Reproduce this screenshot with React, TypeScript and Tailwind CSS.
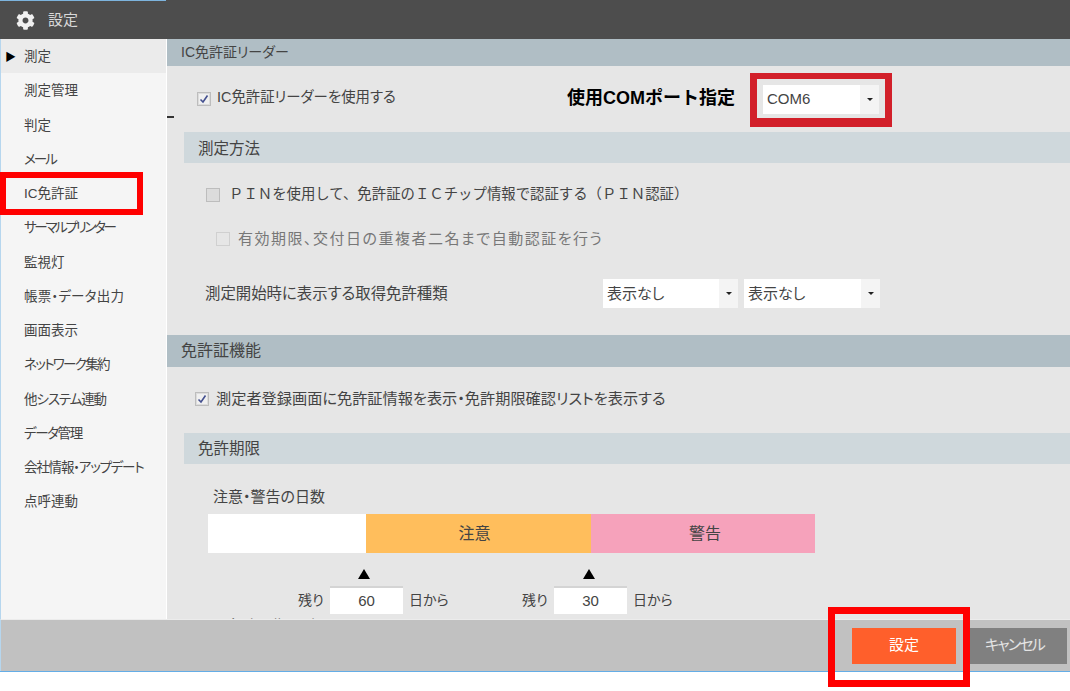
import { FaCog } from "react-icons/fa";

const menu = [
  { label: "測定", tracking: "" },
  { label: "測定管理", tracking: "" },
  { label: "判定", tracking: "" },
  { label: "メール", tracking: "tracking-[-2px]" },
  { label: "IC免許証", tracking: "" },
  { label: "サーマルプリンター", tracking: "tracking-[-2.3px]" },
  { label: "監視灯", tracking: "" },
  { label: "帳票・データ出力", tracking: "tracking-[0.2px]" },
  { label: "画面表示", tracking: "" },
  { label: "ネットワーク集約", tracking: "tracking-[-1.7px]" },
  { label: "他システム連動", tracking: "tracking-[-1.1px]" },
  { label: "データ管理", tracking: "tracking-[-1.4px]" },
  { label: "会社情報・アップデート", tracking: "tracking-[-1.2px]" },
  { label: "点呼連動", tracking: "" },
];

const fontStack = "font-['Liberation_Sans','Noto_Sans_CJK_JP',sans-serif]";
const palt = "[font-feature-settings:'palt']";

const Check = ({ on, dim }: { on?: boolean; dim?: boolean }) => (
  <span
    className={`flex h-[14px] w-[14px] shrink-0 items-center justify-center border ${
      dim ? "border-[#d0d0d0] bg-[#e6e6e6]" : "border-[#bdbdbd] bg-[#dcdcdc]"
    }`}
  >
    {on && (
      <svg viewBox="0 0 12 12" className="h-[12px] w-[12px]">
        <rect x="1" y="1" width="10" height="10" fill="#f0f0f0" />
        <path d="M2.5 6.5 L5 9 L9.5 2.5" fill="none" stroke="#44508f" strokeWidth="1.6" />
      </svg>
    )}
  </span>
);

const Select = ({ value, className }: { value: string; className: string }) => (
  <div className={`flex h-[29px] items-center bg-white ${className}`}>
    <span className={`flex-1 pl-1 pt-px text-[15px] text-[#444] ${palt}`}>{value}</span>
    <span className="flex h-full w-[19px] items-center justify-center bg-[#f4f4f4]">
      <span className="h-0 w-0 border-x-[3px] border-t-[3px] border-x-transparent border-t-[#222]" />
    </span>
  </div>
);

const Remain = ({ days, className, arrow }: { days: string; className: string; arrow: string }) => (
  <div className={`flex flex-col ${className}`}>
    <div className={`h-0 w-0 border-x-[6px] border-b-[10px] border-x-transparent border-b-black ${arrow}`} />
    <div className={`mt-[7px] flex items-center text-[14px] text-[#444] ${palt}`}>
      <span className="w-[32px]">残り</span>
      <span className="flex h-[28px] w-[73px] items-center justify-center border-t-2 border-[#d4d4d4] bg-white text-[15px]">
        {days}
      </span>
      <span className="ml-[6px]">日から</span>
    </div>
  </div>
);

export default function App() {
  return (
    <div className={`relative flex h-[691px] w-[1070px] flex-col overflow-hidden bg-white ${fontStack}`}>
      {/* title bar */}
      <div className="flex h-[39px] shrink-0 bg-[#4d4d4d]">
        <div className="flex h-full w-[166px] items-center border-t border-[#7db4de] pl-[16px] text-[15px] text-[#d8d8d8]">
          <FaCog className="h-[19px] w-[19px] text-[#f0f0f0]" />
          <span className="ml-[13px] pt-px">設定</span>
        </div>
      </div>

      <div className="flex h-[580px] shrink-0">
        {/* side menu */}
        <div className="w-[167px] shrink-0 border-r border-l border-r-white border-l-[#b6d6ee] bg-[#f5f5f5]">
          {menu.map((item, i) => (
            <div
              key={item.label}
              className={`flex h-[34.25px] items-center pt-[2px] text-[13.5px] text-[#444] ${palt} ${i === 0 ? "bg-[#ebebeb]" : ""}`}
            >
              <span className="w-[23px] pl-1 text-[11px] text-black">{i === 0 ? "▶" : ""}</span>
              <span className={`whitespace-nowrap ${item.tracking}`}>{item.label}</span>
            </div>
          ))}
        </div>

        {/* settings body */}
        <div className={`min-w-0 flex-1 overflow-hidden bg-[#e6e6e6] text-[15px] text-[#444] ${palt}`}>
          <div className="flex h-[27px] items-center bg-[#b0bec5] pb-px pl-[14px] text-[14px]">IC免許証リーダー</div>

          <div className="flex h-[66px] items-center pl-[30px]">
            <Check on />
            <span className="ml-[6px] mb-[2px] w-[350px] text-[14.4px]">IC免許証リーダーを使用する</span>
            <span className="mb-px w-[196px] text-[18px] font-bold text-black [font-feature-settings:normal]">使用COMポート指定</span>
            <Select value="COM6" className="w-[116px]" />
          </div>

          <div className="ml-[17px] flex h-[31px] items-center bg-[#cfd8dc] pl-[14px] pt-[2px] text-[15.5px]">測定方法</div>

          <div className="mt-[23px] flex h-[18px] items-center pl-[39px]">
            <Check />
            <span className="ml-[9px] text-[14.4px] [font-feature-settings:normal]">
              ＰＩＮを使用して、免許証のＩＣチップ情報で認証する（ＰＩＮ認証）
            </span>
          </div>
          <div className="mt-[26px] flex h-[18px] items-center pl-[49px] text-[#777]">
            <Check dim />
            <span className="ml-[8px] text-[15px] tracking-[1.5px]">有効期限、交付日の重複者二名まで自動認証を行う</span>
          </div>

          <div className="mt-[31px] flex items-center pl-[38px]">
            <span className="w-[398px] text-[15.4px]">測定開始時に表示する取得免許種類</span>
            <Select value="表示なし" className="w-[135px]" />
            <Select value="表示なし" className="ml-[6px] w-[136px]" />
          </div>

          <div className="mt-[27px] flex h-[32px] items-center bg-[#b0bec5] pl-[14px] text-[16px]">免許証機能</div>

          <div className="mt-[23px] flex h-[18px] items-center pl-[28px]">
            <Check on />
            <span className="ml-[7px] text-[15.2px]">測定者登録画面に免許証情報を表示・免許期限確認リストを表示する</span>
          </div>

          <div className="ml-[17px] mt-[25px] flex h-[31px] items-center bg-[#cfd8dc] pl-[14px] text-[15.5px]">免許期限</div>

          <div className="ml-[46px] mt-[24px] h-[18px] leading-[18px]">注意・警告の日数</div>
          <div className="ml-[41px] mt-[8px] flex h-[39px] w-[607px] text-[16px]">
            <div className="w-[158px] bg-white" />
            <div className="flex w-[225px] items-center justify-center bg-[#ffbe5c] pr-[8px] pt-px">注意</div>
            <div className="flex w-[224px] items-center justify-center bg-[#f6a2bb] pl-[4px] pt-px">警告</div>
          </div>

          <div className="mt-[16px] flex">
            <Remain days="60" arrow="ml-[60px]" className="ml-[131px] w-[224px]" />
            <Remain days="30" arrow="ml-[61px]" className="" />
          </div>
          <div className="ml-[61px] mt-[4px] text-[15px] leading-[16px] text-[#666]">免許証期限確認リスト</div>
        </div>
      </div>

      {/* footer */}
      <div className={`flex h-[52px] shrink-0 items-center justify-end gap-[14px] border-t border-l border-t-[#ececec] border-l-[#b6d6ee] bg-[#c1c1c1] pr-[3px] text-[15px] ${palt}`}>
        <button className="h-[36px] w-[104px] bg-[#ff5f2b] text-white">設定</button>
        <button className="h-[36px] w-[97px] bg-[#808080] pr-[8px] tracking-[-1.8px] text-[#e4e4e4]">キャンセル</button>
      </div>
      <div className="h-px shrink-0 bg-[#64ade6]" />

      {/* annotation boxes drawn over the screenshot */}
      <div className="absolute left-0 top-[172px] h-[43px] w-[143px] border-[6px] border-[#ff0000]" />
      <div className="absolute left-[750px] top-[73px] h-[54px] w-[142px] border-x-[7px] border-t-[6px] border-b-[9px] border-[#d2202a]" />
      <div className="absolute left-[828px] top-[607px] h-[80px] w-[142px] border-[7px] border-[#ff0000]" />
      <div className="absolute left-[167px] top-[116px] h-[2px] w-[7px] bg-[#333]" />
    </div>
  );
}
